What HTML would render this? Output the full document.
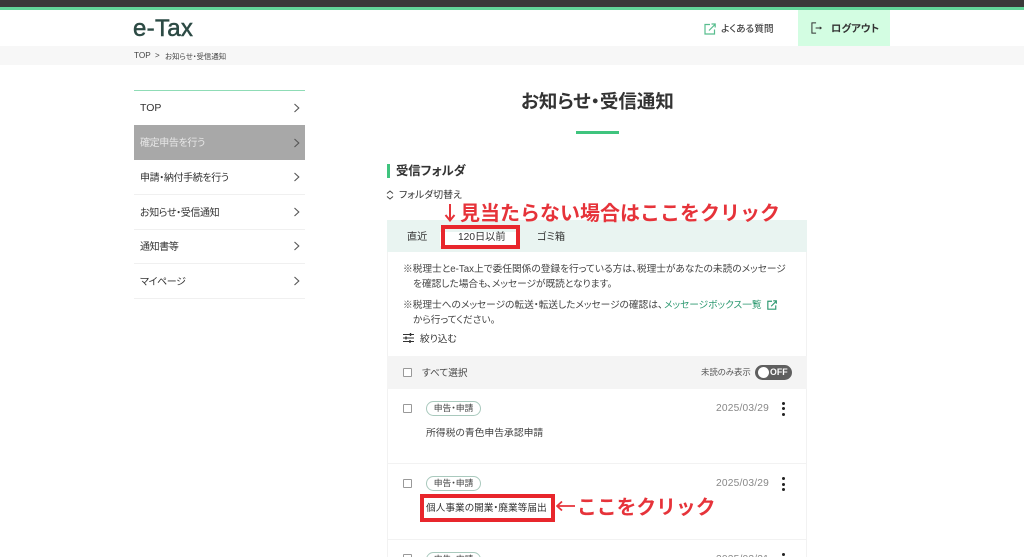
<!DOCTYPE html>
<html lang="ja"><head><meta charset="utf-8"><title>お知らせ・受信通知</title>
<style>
html,body{margin:0;padding:0;background:#fff}
#p{position:relative;width:1024px;height:557px;overflow:hidden;background:#fff;font-family:"Liberation Sans","Noto Sans CJK JP",sans-serif;color:#333;font-feature-settings:"palt"}
#p div,#p svg{position:absolute}
.t{white-space:nowrap;line-height:1}
.n{left:140px;font-size:10px;letter-spacing:-.38px;color:#333}
.l{left:134px;width:171px;height:1px;background:#f0f0f0}
.b{left:403px;font-size:9.7px;color:#444}
.red{color:#e6333a;font-weight:700}
.box{border:4px solid #e8262c;box-sizing:border-box}
.chk{width:9px;height:9px;box-sizing:border-box;border:1px solid #999;border-radius:1px;background:#fff}
.tag{left:426px;width:55px;height:15px;box-sizing:border-box;border:1px solid #a9c9bd;border-radius:8px;font-size:8.8px;line-height:13px;text-align:center;color:#444;background:#fff}
.d{left:716px;font-size:10.2px;color:#888;letter-spacing:.2px}
.dot{width:3px;height:3px;border-radius:50%;background:#222}
</style></head><body><div id="p">
<div style="left:0;top:0;width:1024px;height:7px;background:#3a3a3a"></div>
<div style="left:0;top:7px;width:1024px;height:3px;background:#62d79a"></div>
<div class="t" style="left:133px;top:17px;font-size:24px;color:#2c4a44;letter-spacing:.3px;-webkit-text-stroke:.5px #2c4a44">e-Tax</div>
<div style="left:0;top:46px;width:1024px;height:19px;background:#f7f7f7"></div>
<div class="t" style="left:134px;top:52px;font-size:8.2px;color:#444">TOP</div>
<div class="t" style="left:155px;top:52px;font-size:8px;color:#444">&gt;</div>
<div class="t" style="left:165px;top:53px;font-size:7.4px;color:#444">お知らせ・受信通知</div>

<svg style="left:704px;top:23px" width="12" height="12" viewBox="0 0 12 12" fill="none" stroke="#58bd8e" stroke-width="1.2"><path d="M6 1.500H1v9.500h9.500V6.500M5 7.500 11 1.500M7.500 1H11.200V4.500"/></svg>
<div class="t" style="left:721px;top:25px;font-size:9.700px;color:#444;font-weight:500">よくある質問</div>
<div style="left:798px;top:10px;width:92px;height:36px;background:#d3fde2"></div>
<svg style="left:811px;top:22px" width="12" height="12" viewBox="0 0 13 13" fill="none" stroke="#333" stroke-width="1.100"><path d="M5.500 1H1v11h4.500M5 6.500H11"/><path d="M9.500 4.800 12 6.500 9.500 8.200Z" fill="#333" stroke="none"/></svg>
<div class="t" style="left:831px;top:25px;font-size:10.300px;color:#333;font-weight:700">ログアウト</div>

<div style="left:134px;top:90px;width:171px;height:1px;background:#8fdcb6"></div>
<div class="t n" style="top:103px;font-size:10.500px;letter-spacing:0">TOP</div>
<div style="left:134px;top:125px;width:171px;height:35px;background:#a8a8a8"></div>
<div class="t n" style="top:139px;color:#e6e6e6">確定申告を行う</div>
<div class="t n" style="top:174px">申請・納付手続を行う</div>
<div class="l" style="top:194px"></div>
<div class="t n" style="top:209px">お知らせ・受信通知</div>
<div class="l" style="top:229px"></div>
<div class="t n" style="top:243px">通知書等</div>
<div class="l" style="top:263px"></div>
<div class="t n" style="top:278px">マイページ</div>
<div class="l" style="top:298px"></div>
<svg style="left:293px;top:102px" width="8" height="190" viewBox="0 0 8 190" fill="none" stroke="#555" stroke-width="1.100"><path d="M1.500 2 5.800 6 1.500 10M1.500 37 5.800 41 1.500 45M1.500 71 5.800 75 1.500 79M1.500 106 5.800 110 1.500 114M1.500 140 5.800 144 1.500 148M1.500 175 5.800 179 1.500 183"/></svg>

<div class="t" style="left:521px;top:93px;font-size:18.500px;color:#333;font-weight:700">お知らせ・受信通知</div>
<div style="left:576px;top:131px;width:43px;height:3px;background:#3fc47e"></div>

<div style="left:387px;top:164px;width:3px;height:14px;background:#3fc47e"></div>
<div class="t" style="left:396px;top:165px;font-size:12.300px;color:#333;font-weight:700">受信フォルダ</div>
<svg style="left:386px;top:190px" width="8" height="10" viewBox="0 0 8 10" fill="none" stroke="#444" stroke-width="1"><path d="M1 3.500 4 1 7 3.500M1 6.500 4 9 7 6.500"/></svg>
<div class="t" style="left:399px;top:191px;font-size:9.900px;color:#333">フォルダ切替え</div>

<div style="left:387px;top:220px;width:420px;height:32px;background:#e9f4f1"></div>
<div style="left:387px;top:252px;width:420px;height:305px;background:#fff;border-right:1px solid #f2f2f2;border-left:1px solid #f2f2f2;box-sizing:border-box"></div>
<div class="t" style="left:407px;top:233px;font-size:10.200px;color:#333">直近</div>
<div style="left:440px;top:232px;width:80px;height:14px;background:#fff"></div>
<div class="t" style="left:458px;top:233px;font-size:10.200px;color:#333">120日以前</div>
<div class="t" style="left:537px;top:233px;font-size:10.200px;color:#333">ゴミ箱</div>
<div class="box" style="left:441px;top:225px;width:79px;height:24px"></div>
<svg style="left:443px;top:203px" width="14" height="19" viewBox="0 0 14 19" fill="none" stroke="#e6333a" stroke-width="2"><path d="M7 1V17M2.500 12 7 17.500 11.500 12"/></svg>
<div class="t red" style="left:460px;top:204px;font-size:20px;font-feature-settings:normal">見当たらない場合はここをクリック</div>

<div class="t b" style="top:265px">※税理士とe-Tax上で委任関係の登録を行っている方は、税理士があなたの未読のメッセージ</div>
<div class="t b" style="top:280px;left:413px">を確認した場合も、メッセージが既読となります。</div>
<div class="t b" style="top:301px">※税理士へのメッセージの転送・転送したメッセージの確認は、</div>
<div class="t b" style="top:301px;left:664px;color:#2f9a72">メッセージボックス一覧</div>
<svg style="left:767px;top:300px" width="10" height="10" viewBox="0 0 12 12" fill="none" stroke="#2f9a72" stroke-width="1.400"><path d="M6 1.500H1v9.500h9.500V6.500M5 7.500 11 1.500M7.500 1H11.200V4.500"/></svg>
<div class="t b" style="top:316px;left:413px">から行ってください。</div>
<svg style="left:403px;top:333px" width="11" height="10" viewBox="0 0 11 10" fill="none" stroke="#333" stroke-width="1.100"><path d="M0 1.500H11M0 5H11M0 8.500H11"/><path d="M7.500 0V3M3 3.500V6.500M7 7V10" stroke-width="1.400"/></svg>
<div class="t" style="left:420px;top:335px;font-size:9.700px;color:#333">絞り込む</div>

<div style="left:387px;top:356px;width:420px;height:33px;background:#f4f4f4"></div>
<div class="chk" style="left:403px;top:368px"></div>
<div class="t" style="left:422px;top:369px;font-size:9.600px;color:#444">すべて選択</div>
<div class="t" style="left:701px;top:368px;font-size:8.400px;color:#555">未読のみ表示</div>
<div style="left:755px;top:365px;width:37px;height:15px;border-radius:8px;background:#5f5f5f"></div>
<div style="left:758px;top:367px;width:11px;height:11px;border-radius:50%;background:#fff"></div>
<div class="t" style="left:770px;top:368px;font-size:8.800px;color:#fff;font-weight:700">OFF</div>

<div class="chk" style="left:403px;top:404px"></div>
<div class="tag" style="top:401px">申告・申請</div>
<div class="t d" style="top:404px">2025/03/29</div>
<div class="dot" style="left:782px;top:402px"></div><div class="dot" style="left:782px;top:407px"></div><div class="dot" style="left:782px;top:413px"></div>
<div class="t" style="left:426px;top:429px;font-size:9.800px;color:#444">所得税の青色申告承認申請</div>
<div style="left:388px;top:463px;width:418px;height:1px;background:#f2f2f2"></div>

<div class="chk" style="left:403px;top:479px"></div>
<div class="tag" style="top:476px">申告・申請</div>
<div class="t d" style="top:479px">2025/03/29</div>
<div class="dot" style="left:782px;top:477px"></div><div class="dot" style="left:782px;top:483px"></div><div class="dot" style="left:782px;top:488px"></div>
<div class="t" style="left:426px;top:504px;font-size:9.700px;color:#333">個人事業の開業・廃業等届出</div>
<div class="box" style="left:420px;top:494px;width:135px;height:28px"></div>
<svg style="left:556px;top:499px" width="20" height="14" viewBox="0 0 20 14" fill="none" stroke="#e6333a" stroke-width="1.800"><path d="M19 7H1.500M6 2.500 1 7 6 11.500"/></svg>
<div class="t red" style="left:577px;top:499px;font-size:19.800px;font-feature-settings:normal">ここをクリック</div>
<div style="left:388px;top:539px;width:418px;height:1px;background:#f2f2f2"></div>

<div class="chk" style="left:403px;top:554px"></div>
<div class="tag" style="top:552px">申告・申請</div>
<div class="t d" style="top:555px">2025/03/21</div>
<div class="dot" style="left:782px;top:553px"></div>
</div></body></html>
